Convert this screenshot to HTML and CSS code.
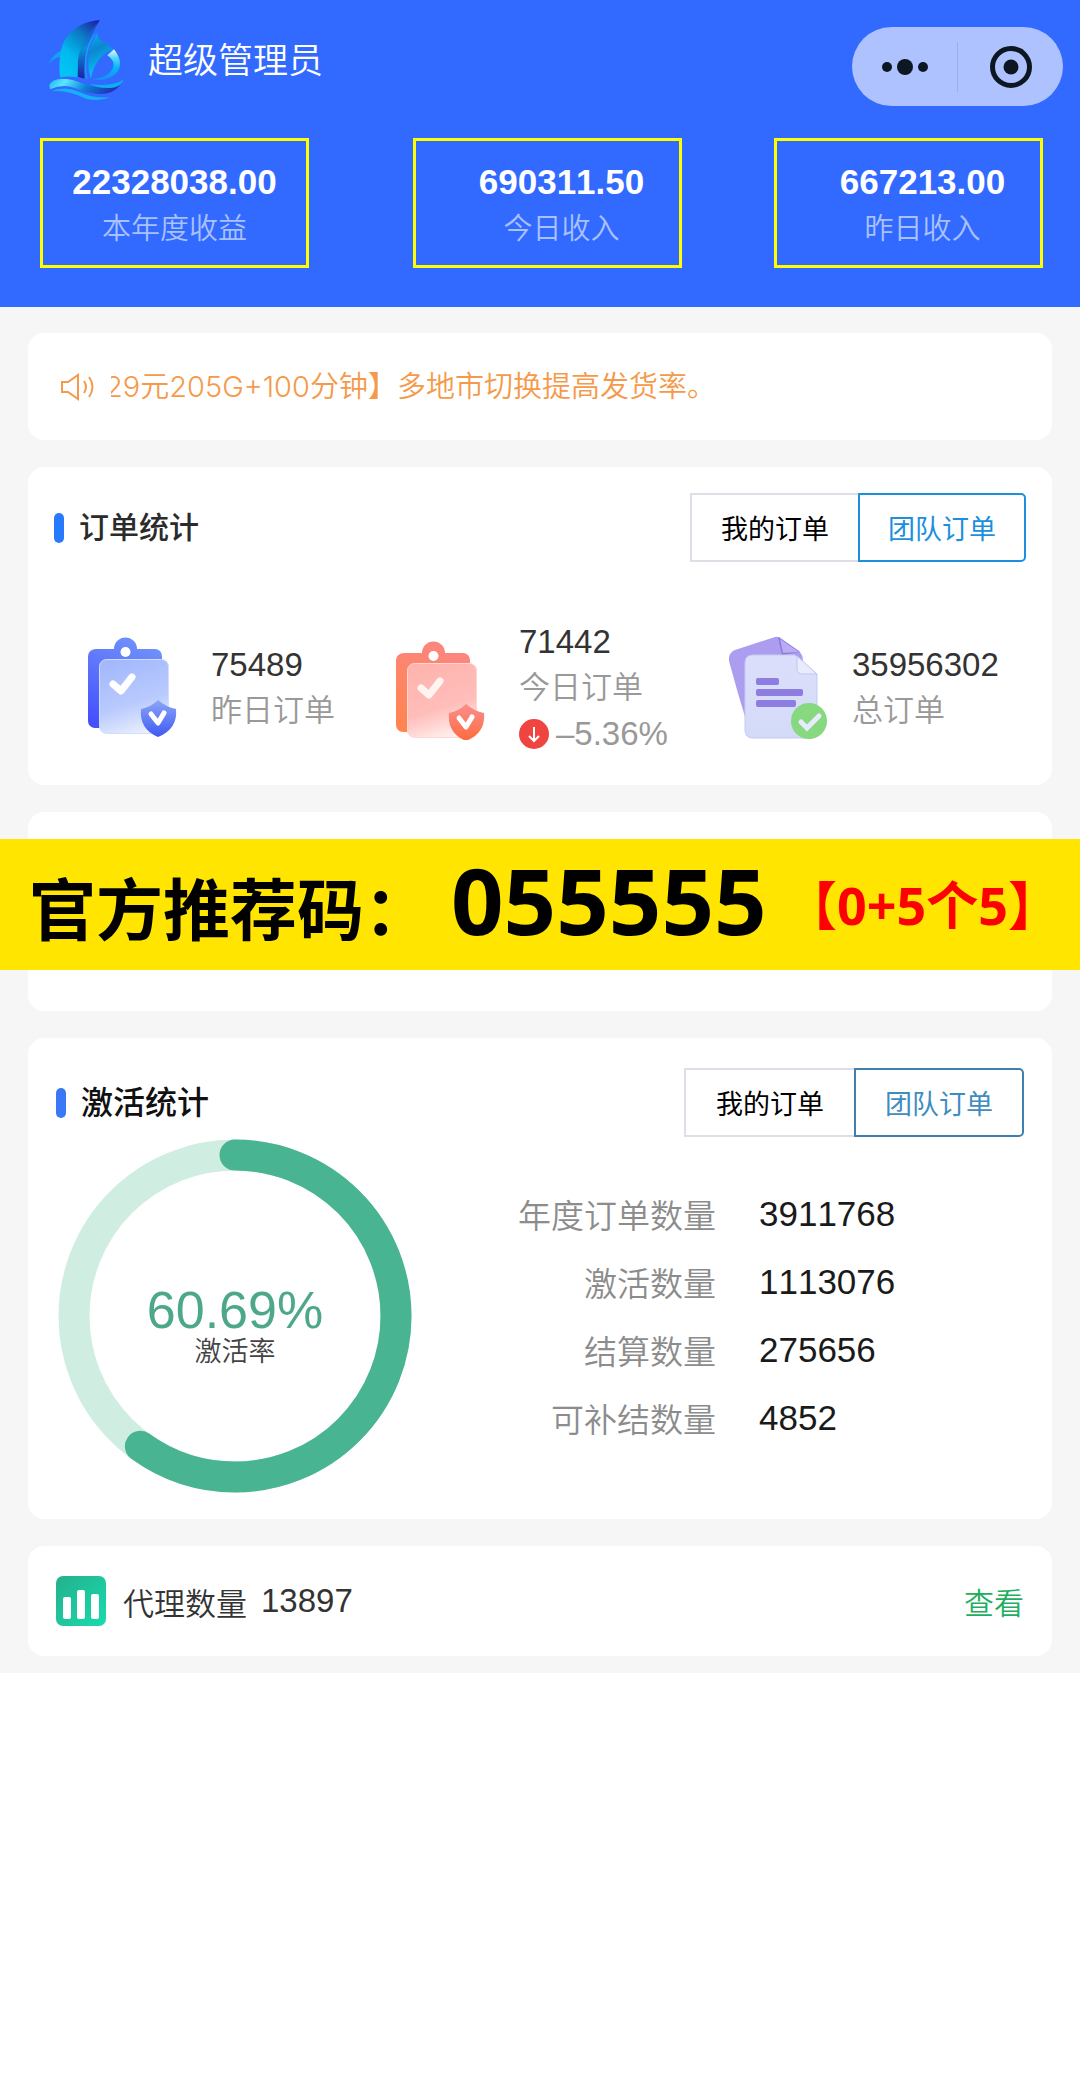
FILE: index.html
```html
<!DOCTYPE html>
<html lang="zh-CN">
<head>
  <meta charset="UTF-8" />
  <meta name="viewport" content="width=device-width, initial-scale=1.0"/>
  <title>超级管理员</title>
  <link rel="stylesheet" href="styles.css">
</head>
<body>

  <div class="page">
    <header class="header">
      <div class="topbar">
        <svg class="logo" viewBox="0 0 300 300" aria-hidden="true">
          <defs>
            <linearGradient id="sail" x1="0.9" y1="0" x2="0.3" y2="1">
              <stop offset="0" stop-color="#1f1fa8"/>
              <stop offset="0.35" stop-color="#0c7cc4"/>
              <stop offset="0.7" stop-color="#00b8ee"/>
              <stop offset="1" stop-color="#04c4f4"/>
            </linearGradient>
            <linearGradient id="mast" x1="0" y1="0" x2="0" y2="1">
              <stop offset="0" stop-color="#1b3fc0"/>
              <stop offset="0.5" stop-color="#0a8fd6"/>
              <stop offset="1" stop-color="#211ca6"/>
            </linearGradient>
            <linearGradient id="jib" x1="0" y1="0" x2="0.3" y2="1">
              <stop offset="0" stop-color="#00b4ff"/>
              <stop offset="0.4" stop-color="#0d86cf"/>
              <stop offset="1" stop-color="#00ccff"/>
            </linearGradient>
            <linearGradient id="ring" x1="0.5" y1="0" x2="0.5" y2="1">
              <stop offset="0" stop-color="#e6fbff"/>
              <stop offset="0.3" stop-color="#4fd4ff"/>
              <stop offset="0.6" stop-color="#00b8fa"/>
              <stop offset="1" stop-color="#1a8cf8"/>
            </linearGradient>
            <linearGradient id="hull" x1="0" y1="0" x2="1" y2="0.2">
              <stop offset="0" stop-color="#12b4f6"/>
              <stop offset="0.25" stop-color="#5ce6ff"/>
              <stop offset="0.6" stop-color="#0884d8"/>
              <stop offset="1" stop-color="#2430b4"/>
            </linearGradient>
          </defs>
          <path fill="#12a0f8" d="M25 162 Q40 132 66 120 L60 140 Q40 145 25 162Z"/>
          <path fill="url(#sail)" d="M180 30 Q112 36 80 82 Q52 122 60 202 Q92 196 134 206 Q126 110 180 30Z"/>
          <path fill="url(#mast)" d="M180 30 Q122 90 114 150 L113 201 L134 206 Q126 110 180 30Z"/>
          <path fill="#15a2f4" d="M172 66 Q128 120 142 206 L138 206 Q126 122 160 76Z"/>
          <path fill="url(#jib)" d="M172 70 L176 86 Q196 96 220 118 Q168 136 152 206 Q130 130 172 70Z"/>
          <path fill="url(#ring)" d="M222 118 Q252 156 232 186 Q206 216 156 208 Q204 204 218 176 Q228 154 202 136Z"/>
          <path fill="url(#hull)" d="M28 226 Q34 208 64 206 Q98 206 130 222 Q180 240 240 226 Q220 254 174 252 Q140 250 104 234 Q70 220 30 238Z"/>
          <path fill="#08b2f2" d="M150 222 Q220 232 252 208 Q238 236 206 234 Q170 234 150 222Z"/>
          <path fill="#15b2f8" d="M34 244 Q76 226 118 246 Q158 266 212 262 Q176 276 138 266 Q82 238 34 244Z"/>
        </svg>
        <h1 class="username">超级管理员</h1>
        <div class="capsule">
          <button class="capsule-btn" aria-label="更多">
            <svg viewBox="0 0 50 50" aria-hidden="true">
              <circle cx="7" cy="25" r="5"/>
              <circle cx="25" cy="25" r="8"/>
              <circle cx="43" cy="25" r="5"/>
            </svg>
          </button>
          <button class="capsule-btn" aria-label="关闭">
            <svg viewBox="0 0 50 50" aria-hidden="true">
              <circle class="ring" cx="25" cy="25" r="18.5"/>
              <circle cx="25" cy="25" r="7.5"/>
            </svg>
          </button>
        </div>
      </div>

      <div class="income">
        <div class="income-box">
          <strong>22328038.00</strong>
          <span>本年度收益</span>
        </div>
        <div class="income-box inset">
          <strong>690311.50</strong>
          <span>今日收入</span>
        </div>
        <div class="income-box inset">
          <strong>667213.00</strong>
          <span>昨日收入</span>
        </div>
      </div>
    </header>

    <main class="content">
      <section class="card notice">
        <svg class="speaker" viewBox="0 0 36 30" aria-hidden="true">
          <path d="M2 10 H8 L18 3 V27 L8 20 H2Z"/>
          <path d="M24 9 Q28 15 24 21"/>
          <path d="M29 5 Q36 15 29 25"/>
        </svg>
        <div class="marquee"><p>29元205G+100分钟】多地市切换提高发货率。</p></div>
      </section>

      <section class="card orders">
        <div class="card-head">
          <h2>订单统计</h2>
          <div class="tabs">
            <button>我的订单</button>
            <button class="active">团队订单</button>
          </div>
        </div>
        <div class="order-list">
          <div class="order">
            <svg class="order-icon" viewBox="0 0 98 104" aria-hidden="true">
              <defs>
                <linearGradient id="blueBack" x1="0.6" y1="0" x2="0.2" y2="1">
                  <stop offset="0" stop-color="#7090fb"/>
                  <stop offset="1" stop-color="#4350fc"/>
                </linearGradient>
                <linearGradient id="blueFront" x1="0.3" y1="0" x2="0.6" y2="1">
                  <stop offset="0" stop-color="#a3b9fc"/>
                  <stop offset="0.6" stop-color="#b9cafd"/>
                  <stop offset="1" stop-color="#e9effe"/>
                </linearGradient>
                <linearGradient id="blueShield" x1="0" y1="0" x2="0" y2="1">
                  <stop offset="0" stop-color="#8ba6fa"/>
                  <stop offset="1" stop-color="#4059f2"/>
                </linearGradient>
              </defs>
              <path fill="url(#blueBack)" d="M8 13 H26 A11.500 11.500 0 0 1 49 13 H67 A7 7 0 0 1 74 20 V84 A7 7 0 0 1 67 92 H7 A7 7 0 0 1 0 85 V20 A8 7 0 0 1 8 13Z"/>
              <circle cx="37.500" cy="16" r="5" fill="#fff"/>
              <rect x="11.500" y="23.500" width="69" height="74" rx="7" fill="url(#blueFront)" stroke="#d3defe"/>
              <path d="M25 48 L33 55 L44 41" fill="none" stroke="#fff" stroke-width="7" stroke-linecap="round" stroke-linejoin="round"/>
              <path fill="url(#blueShield)" d="M70 64 Q78 71 88 73 Q90 93 70 101 Q51 93 53 73 Q63 71 70 64Z"/>
              <path d="M63 78 L70 87 L76 77" fill="none" stroke="#fff" stroke-width="5" stroke-linecap="round" stroke-linejoin="round"/>
            </svg>
            <div class="order-text">
              <b>75489</b>
              <span>昨日订单</span>
            </div>
          </div>
          <div class="order">
            <svg class="order-icon" viewBox="0 0 98 104" aria-hidden="true">
              <defs>
                <linearGradient id="redBack" x1="0.6" y1="0" x2="0.2" y2="1">
                  <stop offset="0" stop-color="#fb8680"/>
                  <stop offset="1" stop-color="#ff8450"/>
                </linearGradient>
                <linearGradient id="redFront" x1="0.3" y1="0" x2="0.6" y2="1">
                  <stop offset="0" stop-color="#ffb4ae"/>
                  <stop offset="0.6" stop-color="#ffbdb9"/>
                  <stop offset="1" stop-color="#fff0ef"/>
                </linearGradient>
                <linearGradient id="redShield" x1="0" y1="0" x2="0" y2="1">
                  <stop offset="0" stop-color="#fb8f8c"/>
                  <stop offset="1" stop-color="#fd6a3f"/>
                </linearGradient>
              </defs>
              <g transform="translate(0 4)">
                <path fill="url(#redBack)" d="M8 13 H26 A11.500 11.500 0 0 1 49 13 H67 A7 7 0 0 1 74 20 V84 A7 7 0 0 1 67 92 H7 A7 7 0 0 1 0 85 V20 A8 7 0 0 1 8 13Z"/>
                <circle cx="37.500" cy="16" r="5" fill="#fff"/>
                <rect x="11.500" y="23.500" width="69" height="74" rx="7" fill="url(#redFront)" stroke="#ffd6d2"/>
                <path d="M25 48 L33 55 L44 41" fill="none" stroke="#fff4f0" stroke-width="7" stroke-linecap="round" stroke-linejoin="round"/>
                <path fill="url(#redShield)" d="M70 64 Q78 71 88 73 Q90 93 70 101 Q51 93 53 73 Q63 71 70 64Z"/>
                <path d="M63 78 L70 87 L76 77" fill="none" stroke="#fff" stroke-width="5" stroke-linecap="round" stroke-linejoin="round"/>
              </g>
            </svg>
            <div class="order-text">
              <b>71442</b>
              <span>今日订单</span>
              <div class="trend">
                <svg viewBox="0 0 30 30" aria-hidden="true">
                  <circle cx="15" cy="15" r="15" fill="#f04440"/>
                  <path d="M15 8 V21 M10 17 L15 22 L20 17" fill="none" stroke="#fff" stroke-width="2"/>
                </svg>
                <em>–5.36%</em>
              </div>
            </div>
          </div>
          <div class="order">
            <svg class="order-icon" viewBox="0 0 98 104" aria-hidden="true">
              <defs>
                <linearGradient id="paper" x1="0" y1="0" x2="0" y2="1">
                  <stop offset="0" stop-color="#dcdffb"/>
                  <stop offset="1" stop-color="#d3daf8"/>
                </linearGradient>
              </defs>
              <path fill="#ac9df0" d="M6 14 L46 1 Q50 0 53 3 L70 15 Q74 19 74 25 L74 80 L17 84 Q8 55 0 25 Q-1 17 6 14Z"/>
              <path fill="#8b78dc" d="M49 1 L53 19 L71 16Z"/>
              <path fill="#b9acf5" d="M51 3 L70 16 L54 17Z"/>
              <path fill="url(#paper)" stroke="#c3cbf2" d="M24 19 H66 L88 38 V94 Q88 102 80 102 H24 Q16 102 16 94 V27 Q16 19 24 19Z"/>
              <path fill="#e9ecfd" stroke="#bfc7ee" d="M68 20 L88 38 H74 Q68 38 68 33Z"/>
              <g fill="#8d7de0">
                <rect x="27" y="42" width="23" height="7" rx="2"/>
                <rect x="27" y="53" width="47" height="7" rx="2"/>
                <rect x="27" y="64" width="40" height="7" rx="2"/>
              </g>
              <circle cx="80" cy="85" r="18" fill="#86d97e"/>
              <path d="M72 86 L78 92 L90 80" fill="none" stroke="#e8ebfd" stroke-width="5" stroke-linecap="round"/>
            </svg>
            <div class="order-text">
              <b>35956302</b>
              <span>总订单</span>
            </div>
          </div>
        </div>
      </section>

      <section class="card promo">
        <div class="banner">
          <p class="banner-main">官方推荐码：<b>055555</b></p>
          <p class="banner-note">【0+5个5】</p>
        </div>
      </section>

      <section class="card activation">
        <div class="card-head">
          <h2>激活统计</h2>
          <div class="tabs">
            <button>我的订单</button>
            <button class="active">团队订单</button>
          </div>
        </div>
        <div class="activation-body">
          <div class="donut">
            <svg viewBox="0 0 354 354" aria-hidden="true">
              <circle class="track" cx="177" cy="177" r="161"/>
              <circle class="value" cx="177" cy="177" r="161" pathLength="100" stroke-dasharray="60 100" transform="rotate(-90 177 177)"/>
            </svg>
            <div class="donut-text">
              <strong>60.69%</strong>
              <span>激活率</span>
            </div>
          </div>
          <table class="figures">
            <tr><th scope="row">年度订单数量</th><td>3911768</td></tr>
            <tr><th scope="row">激活数量</th><td>1113076</td></tr>
            <tr><th scope="row">结算数量</th><td>275656</td></tr>
            <tr><th scope="row">可补结数量</th><td>4852</td></tr>
          </table>
        </div>
      </section>

      <section class="card agents">
        <svg class="agents-icon" viewBox="0 0 50 50" aria-hidden="true">
          <defs>
            <linearGradient id="chart" x1="0" y1="0" x2="1" y2="1">
              <stop offset="0" stop-color="#24b08c"/>
              <stop offset="1" stop-color="#18dcae"/>
            </linearGradient>
          </defs>
          <rect width="50" height="50" rx="7" fill="url(#chart)"/>
          <g fill="#fff">
            <rect x="7" y="21" width="8" height="22" rx="2"/>
            <rect x="21" y="14" width="8" height="29" rx="2"/>
            <rect x="35" y="18" width="8" height="25" rx="2"/>
          </g>
        </svg>
        <span class="agents-label">代理数量</span>
        <b class="agents-count">13897</b>
        <a href="#" class="agents-link">查看</a>
      </section>
    </main>
  </div>

</body>
</html>
```

FILE: styles.css
```css
* {
  box-sizing: border-box;
}

body {
  margin: 0;
  background-color: #fff;
  color: #333;
  font-family: 'Liberation Sans', 'Noto Sans CJK SC', sans-serif;
  font-kerning: none;
}

h1, h2, p {
  margin: 0;
}

button {
  font-family: inherit;
  cursor: pointer;
}

svg {
  display: block;
}

.page {
  background-color: #f6f6f6;
}

/* header */
.header {
  background-color: #326aff;
  padding: 10px 17px 39px 40px;
}

.topbar {
  display: flex;
  align-items: center;
  height: 113px;
  margin-bottom: 15px;
}

.logo {
  width: 100px;
  height: 100px;
  margin-bottom: 13px;
}

.username {
  margin-left: 8px;
  padding-bottom: 11px;
  font-size: 35px;
  line-height: 50px;
  font-weight: 350;
  color: #fff;
}

.capsule {
  display: flex;
  align-items: center;
  width: 211px;
  height: 79px;
  margin-left: auto;
  border-radius: 40px;
  background-color: #adc2ff;
}

.capsule-btn {
  flex: 1;
  display: flex;
  justify-content: center;
  padding: 0;
  border: none;
  background: none;
}

.capsule-btn + .capsule-btn {
  border-left: 1px solid #98aff0;
}

.capsule-btn svg {
  width: 50px;
  height: 50px;
  fill: #0d1722;
}

.capsule-btn .ring {
  fill: none;
  stroke: #0d1722;
  stroke-width: 5;
}

.income {
  display: grid;
  grid-template-columns: 373fr 361fr 269fr;
  margin-right: 20px;
}

.income-box {
  width: 269px;
  height: 130px;
  padding-top: 18px;
  border: 3px solid #ff0;
  text-align: center;
}

.income-box.inset {
  padding-left: 28px;
}

.income-box strong {
  display: block;
  font-size: 35px;
  line-height: 46px;
  color: #fff;
}

.income-box span {
  display: block;
  font-size: 29px;
  line-height: 48px;
  font-weight: 350;
  color: #a9c1ff;
}

/* cards */
.content {
  display: flex;
  flex-direction: column;
  gap: 27px;
  padding: 26px 28px 17px;
}

.card {
  background-color: #fff;
  border-radius: 16px;
}

.card-head {
  display: flex;
  align-items: center;
  justify-content: space-between;
}

.card-head h2 {
  display: flex;
  align-items: center;
  gap: 15px;
  font-size: 30px;
  line-height: 44px;
  font-weight: 500;
  color: #2b2b2b;
}

.card-head h2::before {
  content: "";
  width: 10px;
  height: 30px;
  border-radius: 5px;
  background-color: #2979ff;
}

.tabs {
  display: flex;
}

.tabs button {
  width: 168px;
  height: 69px;
  padding: 0;
  border: 2px solid #dcdfe6;
  border-right: none;
  background-color: #fff;
  font-size: 27px;
  color: #000;
}

.tabs .active {
  border: 2px solid #1c8fdd;
  border-radius: 0 5px 5px 0;
  color: #1c8fdd;
}

.notice {
  display: flex;
  align-items: center;
  gap: 15px;
  height: 107px;
  padding: 0 32px;
}

.speaker {
  width: 36px;
  height: 30px;
  fill: none;
  stroke: #f59a4a;
  stroke-width: 2;
}

.marquee {
  flex: 1;
  display: flex;
  overflow: hidden;
}

.marquee p {
  margin-left: -6px;
  font-family: Inter, 'Noto Sans CJK SC', sans-serif;
  font-size: 29px;
  line-height: 44px;
  font-weight: 350;
  white-space: nowrap;
  color: #f59a4a;
}

.orders {
  padding: 26px 26px 28px;
}

.order-list {
  display: flex;
  gap: 61px;
  margin: 57px 0 0 34px;
}

.order {
  display: flex;
  align-items: center;
  gap: 25px;
}

.order-icon {
  width: 98px;
  height: 104px;
}

.order-text b {
  display: block;
  font-size: 33px;
  line-height: 46px;
  font-weight: 400;
}

.order-text span {
  display: block;
  font-size: 31px;
  line-height: 46px;
  font-weight: 350;
  color: #999;
}

.trend {
  display: flex;
  align-items: center;
  gap: 7px;
}

.trend svg {
  width: 30px;
  height: 30px;
}

.trend em {
  font-size: 33px;
  line-height: 46px;
  font-style: normal;
  color: #999;
}

/* promo strip runs over the full page width */
.promo {
  padding: 27px 0 41px;
}

.banner {
  display: flex;
  align-items: center;
  justify-content: space-between;
  height: 131px;
  margin: 0 -28px;
  padding: 0 20px 0 29px;
  background-color: #ffe500;
  font-family: 'Open Sans', 'Noto Sans CJK SC', sans-serif;
  font-weight: 700;
  line-height: 88px;
  white-space: nowrap;
}

.banner-main {
  font-size: 67px;
  color: #000;
}

.banner-main b {
  margin-left: 20px;
  font-size: 92px;
  font-weight: 700;
}

.banner-note {
  font-size: 52px;
  color: #f00;
}

.activation {
  padding: 30px 28px 26px;
}

.activation .card-head h2 {
  font-size: 32px;
  color: #111;
}

.activation .card-head h2::before {
  background-color: #3b78f5;
}

.activation .tabs button {
  width: 170px;
}

.activation .tabs .active {
  border-color: #3f80b0;
  color: #3f8cc0;
}

.activation-body {
  display: flex;
  align-items: center;
  gap: 106px;
  padding: 2px;
  margin-bottom: -2px;
}

.donut {
  position: relative;
  width: 354px;
}

.donut circle {
  fill: none;
  stroke-width: 31;
}

.donut .track {
  stroke: #d0ede2;
}

.donut .value {
  stroke: #48b492;
  stroke-linecap: round;
}

.donut-text {
  position: absolute;
  inset: 0;
  display: flex;
  flex-direction: column;
  align-items: center;
  justify-content: center;
  padding-top: 22px;
}

.donut-text strong {
  font-size: 52px;
  line-height: 50px;
  font-weight: 400;
  color: #4ca888;
}

.donut-text span {
  font-size: 27px;
  line-height: 34px;
  font-weight: 350;
  color: #444;
}

.figures {
  border-collapse: collapse;
}

.figures th,
.figures td {
  height: 68px;
  padding: 0;
  white-space: nowrap;
}

.figures th {
  font-size: 33px;
  font-weight: 350;
  text-align: right;
  color: #8c8c8c;
}

.figures td {
  padding-left: 43px;
  font-size: 35px;
  color: #1a1a1a;
}

.agents {
  display: flex;
  align-items: center;
  height: 110px;
  padding: 0 28px;
}

.agents-icon {
  width: 50px;
  height: 50px;
}

.agents-label {
  margin: 0 14px 0 17px;
  font-size: 31px;
  font-weight: 350;
}

.agents-count {
  font-size: 33px;
  font-weight: 400;
}

.agents-link {
  margin-left: auto;
  font-size: 30px;
  font-weight: 350;
  text-decoration: none;
  color: #1fae5f;
}
```
